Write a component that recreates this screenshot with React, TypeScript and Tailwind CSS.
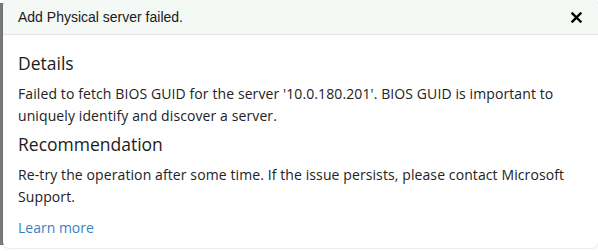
import React from "react";

export default function App() {
  return (
    <div className="w-[598px] h-[251px] bg-white overflow-hidden relative">
      <div className="absolute left-0 top-[3px] w-[4px] h-[242px] bg-[#7a7a7a]" />
      <div className="relative ml-[3px] w-[595px] h-[248px] bg-white rounded-[6px] overflow-hidden shadow-[0_0_2px_rgba(0,0,0,0.25)]">
        <div className="h-[35px] bg-[#f4f9f6] border-b border-[#e4e6e5] flex items-center justify-between pl-[15px] pr-[14px]">
          <span className="text-[14px] text-[#1a1a1a] font-['Liberation_Sans',Arial,sans-serif] pt-[1px]">
            Add Physical server failed.
          </span>
          <svg width="11" height="11" viewBox="0 0 11 11" className="mr-[2px]">
            <path d="M1.5 1.5 L9.5 9.5 M9.5 1.5 L1.5 9.5" stroke="#000" strokeWidth="2.4" strokeLinecap="square" />
          </svg>
        </div>
        <div className="pl-[15px] pr-[6px] font-['Open_Sans','Noto_Sans',sans-serif] text-[#222]">
          <div className="text-[17.5px] leading-[24px] mt-[16px] text-[#1b1b1b]">Details</div>
          <div className="text-[14px] leading-[22px] mt-[8px] whitespace-nowrap tracking-[0.1px]">
            Failed to fetch BIOS GUID for the server '10.0.180.201'. BIOS GUID is important to
            <br />
            uniquely identify and discover a server.
          </div>
          <div className="text-[17.5px] leading-[24px] mt-[5px] text-[#1b1b1b]">Recommendation</div>
          <div className="text-[14px] leading-[22px] mt-[8px] whitespace-nowrap tracking-[0.1px]">
            Re-try the operation after some time. If the issue persists, please contact Microsoft
            <br />
            Support.
          </div>
          <div className="text-[14px] leading-[22px] mt-[9px] text-[#3a7fc1]">Learn more</div>
        </div>
      </div>
    </div>
  );
}
